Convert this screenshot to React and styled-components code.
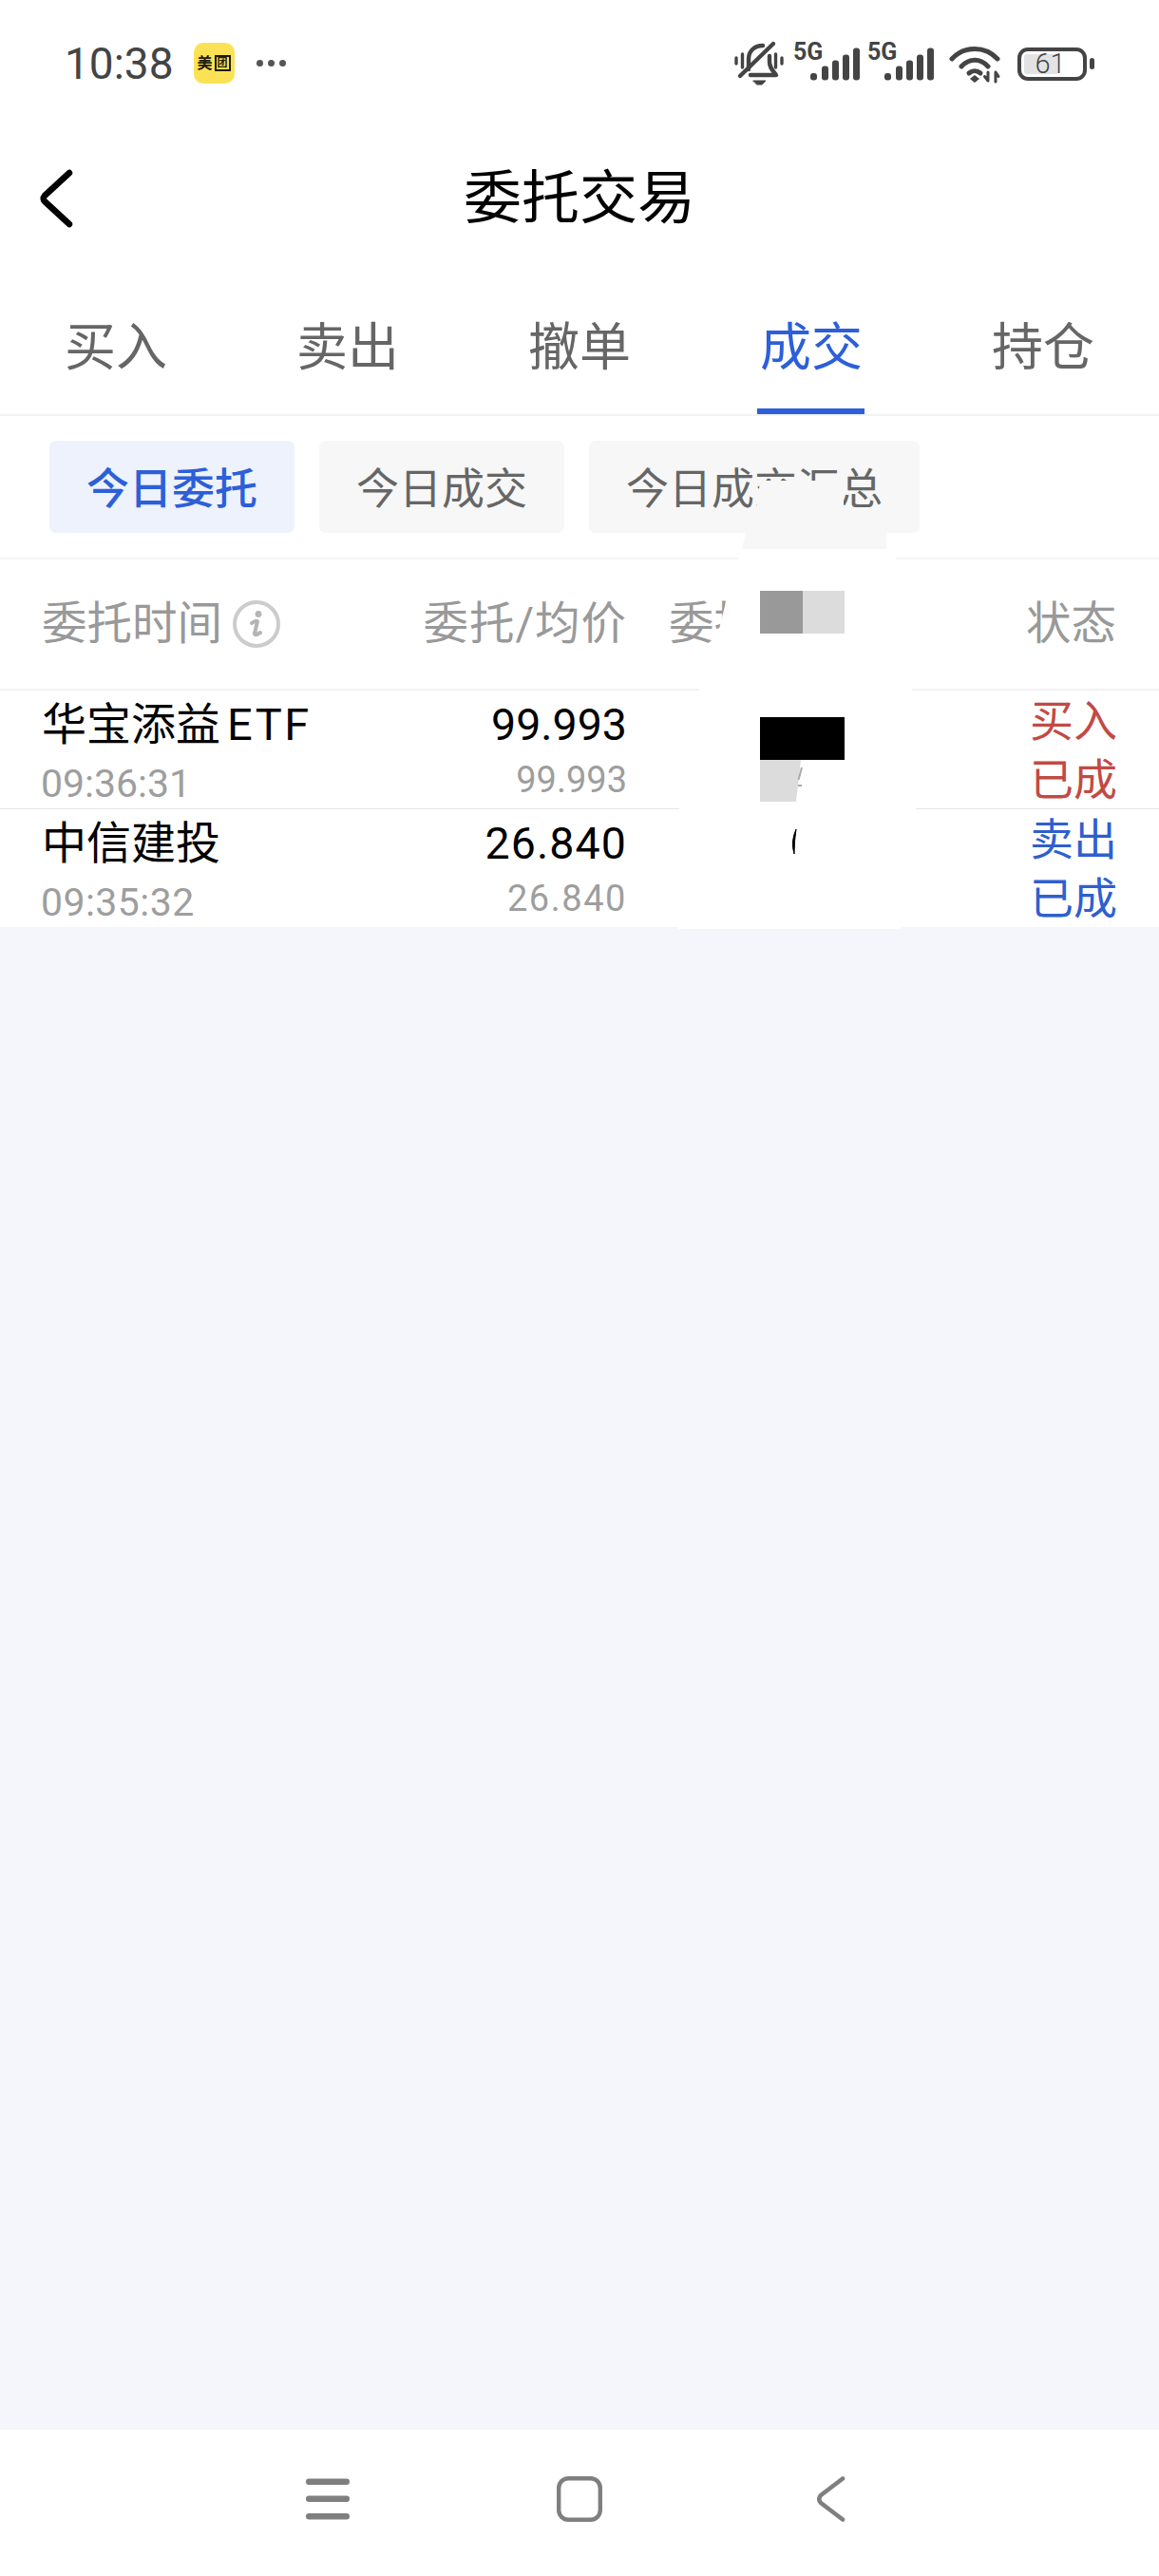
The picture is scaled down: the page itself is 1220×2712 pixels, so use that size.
import React from 'react';
import styled, { createGlobalStyle } from 'styled-components';

const GlobalStyle = createGlobalStyle`
    html, body {
        margin: 0;
        padding: 0;
        background: #fff;
    }
    * {
        box-sizing: border-box;
    }
`;

const CJK = `Roboto, "Noto Sans CJK SC", sans-serif`;
const BLUE = '#2d5fd8';
const ICON = '#444444';

const Page = styled.div`
    position: relative;
    width: 1220px;
    height: 2712px;
    display: flex;
    flex-direction: column;
    background: #fff;
    font-family: ${CJK};
    overflow: hidden;
`;

const StatusBar = styled.div`
    height: 130px;
    padding: 0 68px 0 68px;
    display: flex;
    align-items: center;
    justify-content: space-between;
`;

const StatusLeft = styled.div`
    display: flex;
    align-items: center;
    padding-top: 3px;
`;

const Clock = styled.span`
    font-size: 46px;
    line-height: 50px;
    color: ${ICON};
`;

const AppBadge = styled.div`
    width: 43px;
    height: 43px;
    margin-left: 21px;
    border-radius: 10px;
    background: #fbe254;
    display: flex;
    align-items: center;
    justify-content: center;
    gap: 2px;
    color: #1d1a0a;
    font-size: 16px;
    line-height: 17px;
    font-weight: 700;
`;

const BadgeBoxed = styled.span`
    width: 17px;
    height: 17px;
    border: 2px solid #1d1a0a;
    font-size: 11px;
    line-height: 13px;
    text-align: center;
`;

const MoreDots = styled.div`
    display: flex;
    gap: 5px;
    margin-left: 23px;
`;

const Dot = styled.i`
    width: 7px;
    height: 7px;
    border-radius: 50%;
    background: #555;
`;

const StatusRight = styled.div`
    display: flex;
    align-items: center;
`;

const StatusSvg = styled.svg`
    display: block;
    flex: none;
    overflow: visible;
    margin-left: ${(p) => p.$gap || 0}px;
    margin-top: ${(p) => p.$drop || 0}px;
`;

const BatteryBody = styled.div`
    width: 73px;
    height: 35px;
    margin: 4px 0 0 18px;
    padding: 3px;
    border: 4px solid ${ICON};
    border-radius: 11px;
`;

const BatteryFill = styled.div`
    height: 100%;
    display: flex;
    align-items: center;
    justify-content: center;
    padding-right: 4px;
    border-radius: 3px;
    background: linear-gradient(90deg, #e3e3e3 35px, transparent 35px);
    color: ${ICON};
    font-size: 29px;
    font-weight: 300;
    line-height: 21px;
`;

const BatteryNub = styled.i`
    width: 5px;
    height: 12px;
    margin: 4px 0 0 3px;
    border-radius: 3px;
    background: ${ICON};
`;

const TitleBar = styled.div`
    height: 154px;
    padding: 4px 41px 0;
    display: grid;
    grid-template-columns: 120px 1fr 120px;
    align-items: center;
`;

const Title = styled.h1`
    margin: 0;
    text-align: center;
    font-size: 61px;
    line-height: 70px;
    font-weight: 400;
    color: #000;
`;

const Tabs = styled.div`
    display: grid;
    grid-template-columns: repeat(5, 244px);
    border-bottom: 2px solid #f2f2f2;
`;

const Tab = styled.div`
    position: relative;
    height: 152px;
    padding-top: 51px;
    text-align: center;
    font-size: 54px;
    line-height: 64px;
    color: ${(p) => (p.$active ? BLUE : '#666')};

    &::after {
        content: '';
        display: ${(p) => (p.$active ? 'block' : 'none')};
        position: absolute;
        left: 65px;
        bottom: 0;
        width: 113px;
        height: 6px;
        background: ${BLUE};
    }
`;

const Chips = styled.div`
    display: flex;
    gap: 26px;
    padding: 26px 52px;
    border-bottom: 2px solid #f5f5f5;
`;

const Chip = styled.div`
    height: 97px;
    padding: 0 39px 3px;
    display: flex;
    align-items: center;
    border-radius: 7px;
    background: ${(p) => (p.$active ? '#edf2fc' : '#f7f7f7')};
    color: ${(p) => (p.$active ? BLUE : '#666')};
    font-size: 45px;
    font-weight: ${(p) => (p.$active ? 500 : 400)};
`;

const TableHead = styled.div`
    height: 138px;
    padding: 0 45px 0 44px;
    display: grid;
    grid-template-columns: 300px 316px 1fr auto;
    align-items: center;
    border-bottom: 2px solid #f2f2f2;
    color: #999;
    font-size: 47.5px;
    line-height: 56px;
`;

const HeadLabel = styled.div`
    display: flex;
    align-items: center;
    gap: 11px;
`;

const HeadPrice = styled.div`
    text-align: right;
    letter-spacing: 1px;
`;

const HeadQty = styled.div`
    padding-left: 44px;
`;

const OrderRow = styled.div`
    height: ${(p) => (p.$last ? 124 : 125)}px;
    padding: 0 44px;
    display: grid;
    grid-template-columns: 300px 316px 1fr auto;
    border-bottom: ${(p) => (p.$last ? 'none' : '1px solid #e6e6e6')};
`;

const NameCell = styled.div`
    padding-top: 10px;
`;

const StockName = styled.div`
    font-size: 47px;
    line-height: 52px;
    color: #000;
    white-space: nowrap;
`;

const Latin = styled.span`
    margin-left: 7px;
    letter-spacing: 2.5px;
`;

const OrderTime = styled.div`
    margin-top: 14px;
    margin-left: -1px;
    font-size: 41px;
    line-height: 44px;
    color: #9e9e9e;
    letter-spacing: ${(p) => p.$spread * 0.4}px;
`;

const PriceCell = styled.div`
    padding-top: 10px;
    text-align: right;
`;

const Price = styled.div`
    font-size: 46.5px;
    line-height: 52px;
    color: #000;
    letter-spacing: ${(p) => p.$spread}px;
`;

const AvgPrice = styled.div`
    margin-top: 10px;
    font-size: 38px;
    line-height: 44px;
    color: #9e9e9e;
    letter-spacing: ${(p) => p.$spread * 1.4}px;
`;

const StatusCell = styled.div`
    grid-column: 4;
    padding-top: 1px;
    font-size: 46px;
    line-height: 62px;
    color: ${(p) => (p.$side === 'buy' ? '#c24a44' : '#2f5fcf')};
`;

const Blank = styled.div`
    flex: 1;
    background: #f4f6fb;
`;

const BottomNav = styled.div`
    height: 154px;
    padding-bottom: 8px;
    display: flex;
    align-items: center;
    justify-content: center;
    background: #fff;
`;

const NavSlot = styled.div`
    width: 265px;
    display: flex;
    justify-content: center;
`;

// covered part of the screenshot, sits above the table
const Redaction = styled.svg`
    position: absolute;
    left: 700px;
    top: 490px;
`;

const BackIcon = () => (
    <svg width="36" height="62" viewBox="0 0 36 62" fill="none" stroke="#000" strokeWidth="6.5" strokeLinecap="round" strokeLinejoin="round">
        <path d="M32 4 L6 28 Q3.5 31 6 34 L32 58" />
    </svg>
);

const InfoIcon = () => (
    <svg width="50" height="50" viewBox="0 0 50 50" fill="none">
        <circle cx="25" cy="25" r="23" stroke="#cccccc" strokeWidth="4" />
        <circle cx="27" cy="14.5" r="3.4" fill="#b5b5b5" />
        <path d="M20 24 Q24 21 26 22 L23 35 Q23 38 29 34" stroke="#b5b5b5" strokeWidth="4" strokeLinecap="round" strokeLinejoin="round" />
    </svg>
);

const MuteIcon = () => (
    <StatusSvg $drop={4} width="52" height="46" viewBox="0 0 52 46" fill="none" stroke={ICON} strokeWidth="4.4" strokeLinecap="round" strokeLinejoin="round">
        <path d="M2 17 V23 M8.5 13 V27 M43.5 13 V27 M50 17 V23" strokeWidth="3.4" />
        <path d="M15 29 V18 C15 9 22 4 30 4 M37 15 V21 C37 27 40 30 44 35 H17" />
        <path d="M6 36 L41 2" />
        <path d="M20 41 H33 L29 45 H24 Z" fill={ICON} strokeWidth="1" />
    </StatusSvg>
);

const SignalIcon = ({ gap }) => (
    <StatusSvg $gap={gap} width="70" height="40" viewBox="0 0 70 40" fill={ICON}>
        <text x="0" y="18" fontFamily="Roboto, sans-serif" fontSize="25" fontWeight="700">5G</text>
        <rect x="18" y="32" width="7" height="7.5" rx="3" />
        <rect x="30" y="24.5" width="7" height="15" rx="3" />
        <rect x="41" y="18.5" width="7" height="21" rx="3" />
        <rect x="52" y="12.5" width="7" height="27" rx="3" />
        <rect x="63" y="5.5" width="7" height="34" rx="3" />
    </StatusSvg>
);

const WifiIcon = () => (
    <StatusSvg $gap={16} $drop={4} width="54" height="40" viewBox="0 0 54 40" fill="none" stroke={ICON} strokeWidth="5" strokeLinecap="round">
        <path d="M3 15 C16 1 38 1 51 15" />
        <path d="M13 23 C21 14 33 14 41 23" />
        <path d="M21 30 C24.5 27 29.5 27 33 30" />
        <path d="M27 32 L32 36 L27 40 L22 36 Z" fill={ICON} stroke="none" />
        <path d="M41 29 V38 M37.5 33.5 L41 38 M49 39 V29 M49 29 L52 33.5" strokeWidth="3" />
    </StatusSvg>
);

const MenuIcon = () => (
    <svg width="46" height="44" viewBox="0 0 46 44" fill="#7f7f7f">
        <rect x="0" y="0.5" width="46" height="6.5" rx="3.2" />
        <rect x="0" y="18.5" width="46" height="6.5" rx="3.2" />
        <rect x="0" y="37" width="46" height="6.5" rx="3.2" />
    </svg>
);

const HomeIcon = () => (
    <svg width="48" height="48" viewBox="0 0 48 48" fill="none">
        <rect x="2.2" y="2.2" width="43.6" height="43.6" rx="10" stroke="#7f7f7f" strokeWidth="4.4" />
    </svg>
);

const NavBackIcon = () => (
    <svg width="32" height="48" viewBox="0 0 32 48" fill="none" stroke="#7f7f7f" strokeWidth="4.6" strokeLinecap="round" strokeLinejoin="round">
        <path d="M28 2.5 L5 20 Q1.5 24 5 28 L28 45.5" />
    </svg>
);

const tabs = ['买入', '卖出', '撤单', '成交', '持仓'];
const chips = ['今日委托', '今日成交', '今日成交汇总'];

const orders = [
    { name: '华宝添益', latin: 'ETF', time: '09:36:31', price: '99.993', avg: '99.993', side: 'buy', action: '买入', spread: 0 },
    { name: '中信建投', latin: '', time: '09:35:32', price: '26.840', avg: '26.840', side: 'sell', action: '卖出', spread: 1.1 },
];

const App = () => {
    return (
        <Page>
            <GlobalStyle />
            <StatusBar>
                <StatusLeft>
                    <Clock>10:38</Clock>
                    <AppBadge>
                        <span>美</span>
                        <BadgeBoxed>团</BadgeBoxed>
                    </AppBadge>
                    <MoreDots>
                        <Dot />
                        <Dot />
                        <Dot />
                    </MoreDots>
                </StatusLeft>
                <StatusRight>
                    <MuteIcon />
                    <SignalIcon gap={10} />
                    <SignalIcon gap={8} />
                    <WifiIcon />
                    <BatteryBody>
                        <BatteryFill>61</BatteryFill>
                    </BatteryBody>
                    <BatteryNub />
                </StatusRight>
            </StatusBar>

            <TitleBar>
                <BackIcon />
                <Title>委托交易</Title>
            </TitleBar>

            <Tabs>
                {tabs.map((tab) => (
                    <Tab key={tab} $active={tab === '成交'}>{tab}</Tab>
                ))}
            </Tabs>

            <Chips>
                {chips.map((chip, i) => (
                    <Chip key={chip} $active={i === 0}>{chip}</Chip>
                ))}
            </Chips>

            <TableHead>
                <HeadLabel>
                    委托时间
                    <InfoIcon />
                </HeadLabel>
                <HeadPrice>委托/均价</HeadPrice>
                <HeadQty>委托</HeadQty>
                <div>状态</div>
            </TableHead>

            {orders.map((order, i) => (
                <OrderRow key={order.time} $last={i === orders.length - 1}>
                    <NameCell>
                        <StockName>
                            {order.name}
                            {order.latin && <Latin>{order.latin}</Latin>}
                        </StockName>
                        <OrderTime $spread={order.spread}>{order.time}</OrderTime>
                    </NameCell>
                    <PriceCell>
                        <Price $spread={order.spread}>{order.price}</Price>
                        <AvgPrice $spread={order.spread}>{order.avg}</AvgPrice>
                    </PriceCell>
                    <StatusCell $side={order.side}>
                        {order.action}
                        <br />
                        已成
                    </StatusCell>
                </OrderRow>
            ))}

            <Blank />

            <BottomNav>
                <NavSlot><MenuIcon /></NavSlot>
                <NavSlot><HomeIcon /></NavSlot>
                <NavSlot><NavBackIcon /></NavSlot>
            </BottomNav>

            <Redaction width="300" height="500" viewBox="700 490 300 500">
                <polygon fill="#f7f7f7" points="800,506 888,506 888,534 934,534 933,578 781,578 785,561 797,531" />
                <polygon fill="#ffffff" points="778,578 942,578 960,725 964,851 950,976 947,978 714,978 715,851 736,725 755,670 765,630 778,590" />
                <rect x="800" y="622" width="45" height="45" fill="#999999" />
                <rect x="845" y="622" width="44" height="45" fill="#dcdcdc" />
                <rect x="800" y="755" width="89" height="45" fill="#000000" />
                <polygon points="800,800 843,800 838,844 800,844" fill="#dcdcdc" />
                <path d="M844 808 L840.5 821 M840 827 H844" stroke="#aaaaaa" strokeWidth="2" fill="none" />
                <path d="M838 873 Q832 886 836 899 Q836 885 838 873 Z" fill="#000" stroke="#000" strokeWidth="1" />
            </Redaction>
        </Page>
    );
};

export default App;
